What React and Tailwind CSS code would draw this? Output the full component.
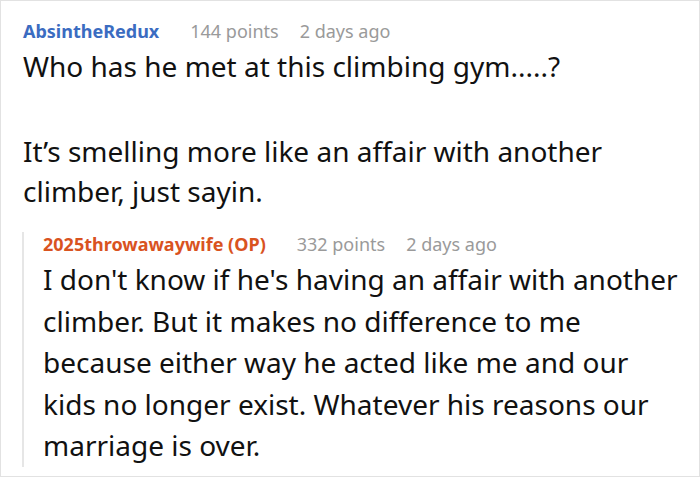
import React from "react";

const font = { fontFamily: "'Noto Sans', 'Open Sans', sans-serif" };

const replyLines = [
  "I don't know if he's having an affair with another",
  "climber. But it makes no difference to me",
  "because either way he acted like me and our",
  "kids no longer exist. Whatever his reasons our",
  "marriage is over.",
];

export default function App() {
  return (
    <div
      className="w-[700px] h-[477px] bg-white border border-[#e2e2e2] overflow-hidden"
      style={font}
    >
      {/* ===== parent comment ===== */}
      <div className="pl-[22px] pt-[18px]">
        <div className="flex items-baseline text-[18px] leading-[24px]">
          <span className="font-bold text-[#3b6cc1]">AbsintheRedux</span>
          <span className="ml-[31px] text-[#9a9a9a]">144 points</span>
          <span className="ml-[21px] text-[#9a9a9a]">2 days ago</span>
        </div>
        <div className="text-[28px] leading-[40px] text-[#111] mt-[3px]">
          <p>Who has he met at this climbing gym.....?</p>
          <p className="mt-[45px]">It’s smelling more like an affair with another</p>
          <p>climber, just sayin.</p>
        </div>
      </div>

      {/* ===== reply ===== */}
      <div className="ml-[21px] mt-[29px] border-l-2 border-[#e6e6e6] pl-[19px]">
        <div className="flex items-baseline text-[18px] leading-[24px] -mt-[8px]">
          <span className="font-bold text-[#d9531f]">2025throwawaywife (OP)</span>
          <span className="ml-[31px] text-[#9a9a9a]">332 points</span>
          <span className="ml-[21px] text-[#9a9a9a]">2 days ago</span>
        </div>
        <div className="text-[28px] leading-[41.5px] text-[#111] mt-[3px] whitespace-nowrap">
          {replyLines.map((line) => (
            <p key={line}>{line}</p>
          ))}
        </div>
      </div>
    </div>
  );
}
